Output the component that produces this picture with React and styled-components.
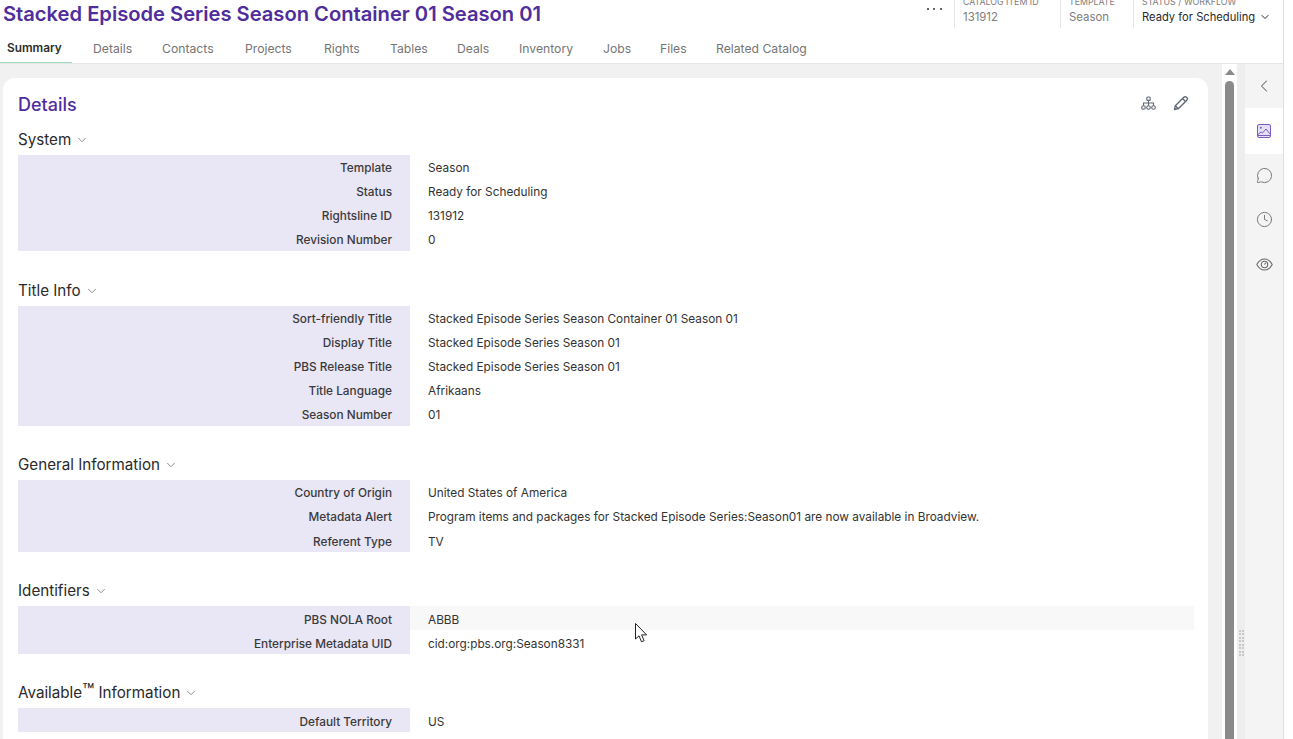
import React from 'react'
import styled, { createGlobalStyle } from 'styled-components'
import { ChevronDown, ChevronLeft, MessageCircle, Clock } from 'lucide-react'

const Global = createGlobalStyle`
  html, body { margin: 0; padding: 0; height: 100%; overflow: hidden; background: #fff; }
  body { font-family: Inter, "Noto Sans", sans-serif; color: #2b2b2b; }
`

const Page = styled.div`
  position: relative;
  width: 1284px;
  height: 739px;
  display: flex;
  flex-direction: column;
  border-right: 1px solid #dedede;
  box-sizing: border-box;
  overflow: hidden;
`

const Header = styled.header`
  flex: none;
  height: 64px;
  box-sizing: border-box;
  border-bottom: 1px solid #e6e6e6;
  background: #fff;
`

const TitleBar = styled.div`
  height: 28px;
  display: flex;
  justify-content: space-between;
  padding-left: 3px;
`

const Title = styled.h1`
  margin: 0;
  font-size: 20.15px;
  line-height: 28px;
  font-weight: 600;
  color: #4f2d9c;
  white-space: nowrap;
`

const Meta = styled.div`
  display: flex;
  align-items: flex-start;
  height: 28px;
`

const More = styled.div`
  width: 40px;
  height: 18px;
  display: flex;
  align-items: center;
  justify-content: center;
  gap: 4.5px;
  & > span { width: 2px; height: 2px; background: #333; border-radius: 50%; }
`

const MetaItem = styled.div`
  width: ${p => p.$width}px;
  height: 28px;
  box-sizing: border-box;
  border-left: 1px solid #e6e6e6;
  padding-left: 8px;
  overflow: hidden;
`

const MetaLabel = styled.div`
  font-size: 8.8px;
  line-height: 12px;
  margin-top: -4px;
  color: #7d7d7d;
  white-space: nowrap;
`

const MetaValue = styled.div`
  display: flex;
  align-items: center;
  gap: 4px;
  font-size: ${p => (p.$strong ? '11.2px' : '11.4px')};
  line-height: 16px;
  margin-top: 1px;
  color: ${p => (p.$strong ? '#2b2b2b' : '#7d7d7d')};
  white-space: nowrap;
`

const Tabs = styled.nav`
  height: 35px;
  display: flex;
  align-items: stretch;
`

const ActiveTab = styled.div`
  display: flex;
  align-items: center;
  box-sizing: border-box;
  width: 72px;
  margin-right: 21px;
  padding: 6px 0 0 7px;
  font-size: 11.8px;
  font-weight: 600;
  color: #2b2b2b;
  border-bottom: 1px solid #9ed8bd;
`

const Tab = styled.div`
  display: flex;
  align-items: center;
  width: ${p => p.$pitch}px;
  padding-top: 5px;
  font-size: 12.2px;
  color: #757575;
  white-space: nowrap;
`

const Body = styled.div`
  flex: 1;
  min-height: 0;
  display: flex;
  background: #f1f1f1;
`

const Content = styled.main`
  width: 1222px;
  flex: none;
  padding: 14px 14px 0 3px;
  box-sizing: border-box;
  overflow: hidden;
`

const Card = styled.section`
  background: #fff;
  border-radius: 12px 12px 0 0;
  padding: 15px 14px 0 15px;
  height: 700px;
  box-sizing: border-box;
`

const CardHead = styled.div`
  display: flex;
  justify-content: space-between;
  align-items: center;
  height: 24px;
  margin-bottom: 8px;
`

const CardTitle = styled.h2`
  margin: -1px 0 0;
  font-size: 18px;
  font-weight: 500;
  color: #4f2d9c;
`

const CardTools = styled.div`
  display: flex;
  align-items: center;
  gap: 17px;
  color: #5f6672;
  margin-right: 5px;
  margin-top: -4px;
`

const Group = styled.div`
  margin-bottom: ${p => p.$gap}px;
`

const GroupHead = styled.div`
  display: flex;
  align-items: center;
  gap: 4px;
  box-sizing: border-box;
  height: 30px;
  padding-bottom: 2px;
  font-size: 15.2px;
  font-weight: 400;
  color: #2b2b2b;
  white-space: pre;
  & > svg { margin-top: 2px; color: #666; }
`

const Trademark = styled.span`
  font-size: 1.3em;
  line-height: 0;
`

const Row = styled.div`
  display: grid;
  grid-template-columns: 392px 1fr;
  height: 24px;
  font-size: 11.8px;
  line-height: ${p => p.$lead}px;
  background: ${p => (p.$hover ? '#f8f8f8' : 'transparent')};
`

const Label = styled.div`
  background: #e9e6f6;
  height: 24px;
  text-align: right;
  padding-right: 18px;
  font-weight: 500;
  color: #3a3a3a;
`

const Value = styled.div`
  padding-left: 18px;
  height: 24px;
  color: #333;
`

const Track = styled.div`
  width: 15px;
  flex: none;
  background: #fff;
  display: flex;
  flex-direction: column;
  align-items: center;
`

const ArrowUp = styled.div`
  margin-top: 5px;
  width: 0;
  height: 0;
  border-left: 5px solid transparent;
  border-right: 5px solid transparent;
  border-bottom: 6px solid #8a8a8a;
`

const Thumb = styled.div`
  margin-top: 6px;
  width: 9px;
  flex: 1;
  background: #8a8a8a;
  border-radius: 5px 5px 0 0;
`

const Splitter = styled.div`
  width: 8px;
  flex: none;
  background: #eeeeee;
  display: flex;
  align-items: flex-end;
  justify-content: center;
  padding-bottom: 83px;
  box-sizing: border-box;
`

const Grip = styled.div`
  display: grid;
  grid-template-columns: 2px 2px;
  gap: 1.5px 1px;
  & > span { width: 2px; height: 2px; background: #c8c8c8; }
`

const Rail = styled.aside`
  width: 38px;
  flex: none;
  background: #f4f4f4;
  display: flex;
  flex-direction: column;
`

const RailItem = styled.div`
  height: ${p => p.$height}px;
  display: flex;
  align-items: center;
  justify-content: center;
  background: ${p => (p.$active ? '#fff' : 'transparent')};
  color: ${p => (p.$active ? '#7c5cc4' : '#6a6a6a')};
`

const Cursor = styled.svg`
  position: absolute;
  left: 635px;
  top: 623px;
`

const tabs = [['Details', 69], ['Contacts', 83], ['Projects', 79], ['Rights', 66], ['Tables', 67], ['Deals', 62], ['Inventory', 84], ['Jobs', 57], ['Files', 56], ['Related Catalog', 100]]

const groups = [
  { id: 'system', name: 'System', gap: 25, lead: 26, rows: [['Template', 'Season'], ['Status', 'Ready for Scheduling'], ['Rightsline ID', '131912'], ['Revision Number', '0']] },
  { id: 'title', name: 'Title Info', gap: 24, lead: 26, rows: [['Sort-friendly Title', 'Stacked Episode Series Season Container 01 Season 01'], ['Display Title', 'Stacked Episode Series Season 01'], ['PBS Release Title', 'Stacked Episode Series Season 01'], ['Title Language', 'Afrikaans'], ['Season Number', '01']] },
  { id: 'general', name: 'General Information', gap: 24, lead: 26, rows: [['Country of Origin', 'United States of America'], ['Metadata Alert', 'Program items and packages for Stacked Episode Series:Season01 are now available in Broadview.'], ['Referent Type', 'TV', 28]] },
  { id: 'ids', name: 'Identifiers', gap: 24, lead: 28, rows: [['PBS NOLA Root', 'ABBB'], ['Enterprise Metadata UID', 'cid:org:pbs.org:Season8331']] },
  { id: 'available', name: <span>Available<Trademark>™</Trademark> Information</span>, gap: 0, lead: 28, rows: [['Default Territory', 'US']] },
]

function HierarchyIcon() {
  return (
    <svg width="15" height="15" viewBox="0 0 15 15" fill="none" stroke="currentColor" strokeWidth="1.1">
      <rect x="5.800" y="1" width="3.400" height="3.400" rx="1" />
      <path d="M7.500 4.400v5M2.500 9.500V7h10v2.500" />
      <circle cx="2.500" cy="11.500" r="1.800" />
      <circle cx="7.500" cy="11.500" r="1.800" />
      <circle cx="12.500" cy="11.500" r="1.800" />
    </svg>
  )
}

function EditIcon() {
  return (
    <svg width="16" height="16" viewBox="0 0 16 16" fill="none" stroke="currentColor" strokeWidth="1.3" strokeLinejoin="round">
      <path d="M1.500 14.500l.8-3.800L10.800 2.200a1.900 1.900 0 0 1 2.700 0l.3.300a1.900 1.900 0 0 1 0 2.700L5.300 13.700z" />
      <path d="M9.500 3.500l3 3M2.300 10.700l3 3" />
    </svg>
  )
}

function PictureIcon() {
  return (
    <svg width="14" height="14" viewBox="0 0 14 14" fill="#e6e0f7" stroke="currentColor" strokeWidth="1">
      <rect x=".5" y=".5" width="13" height="13" rx="1.500" />
      <circle cx="3.800" cy="3.800" r="1" fill="currentColor" stroke="none" />
      <path d="M1 10.500l3-2.500 1.500 1L9 5l4 5" fill="none" />
      <path d="M1 11.500h12" fill="none" />
    </svg>
  )
}

function WatchIcon() {
  return (
    <svg width="17" height="13" viewBox="0 0 17 13" fill="none" stroke="currentColor" strokeWidth="1.100">
      <path d="M.8 6.500C2.800 2.800 5.400 1 8.500 1s5.700 1.800 7.700 5.500c-2 3.700-4.600 5.500-7.700 5.500S2.800 10.200.8 6.500z" />
      <circle cx="8.500" cy="6.500" r="3.200" />
      <path d="M8.500 6.500l1.300-1.600" />
    </svg>
  )
}

export default function App() {
  return (
    <>
      <Global />
      <Page>
        <Header>
          <TitleBar>
            <Title>Stacked Episode Series Season Container 01 Season 01</Title>
            <Meta>
              <More><span /><span /><span /></More>
              <MetaItem $width={106}>
                <MetaLabel>CATALOG ITEM ID</MetaLabel>
                <MetaValue>131912</MetaValue>
              </MetaItem>
              <MetaItem $width={73}>
                <MetaLabel>TEMPLATE</MetaLabel>
                <MetaValue>Season</MetaValue>
              </MetaItem>
              <MetaItem $width={150}>
                <MetaLabel>STATUS / WORKFLOW</MetaLabel>
                <MetaValue $strong>Ready for Scheduling <ChevronDown size={12} /></MetaValue>
              </MetaItem>
            </Meta>
          </TitleBar>
          <Tabs>
            <ActiveTab>Summary</ActiveTab>
            {tabs.map(([t, pitch]) => <Tab key={t} $pitch={pitch}>{t}</Tab>)}
          </Tabs>
        </Header>
        <Body>
          <Content>
            <Card>
              <CardHead>
                <CardTitle>Details</CardTitle>
                <CardTools>
                  <HierarchyIcon />
                  <EditIcon />
                </CardTools>
              </CardHead>
              {groups.map(g => (
                <Group key={g.id} $gap={g.gap}>
                  <GroupHead>
                    {g.name}<ChevronDown size={14} strokeWidth={1.25} />
                  </GroupHead>
                  {g.rows.map(([l, v, lead]) => (
                    <Row key={l} $lead={lead || g.lead} $hover={l === 'PBS NOLA Root'}>
                      <Label>{l}</Label>
                      <Value>{v}</Value>
                    </Row>
                  ))}
                </Group>
              ))}
            </Card>
          </Content>
          <Track>
            <ArrowUp />
            <Thumb />
          </Track>
          <Splitter>
            <Grip>{Array.from({ length: 16 }).map((_, i) => <span key={i} />)}</Grip>
          </Splitter>
          <Rail>
            <RailItem $height={44}><ChevronLeft size={20} strokeWidth={1.25} /></RailItem>
            <RailItem $active $height={46}><PictureIcon /></RailItem>
            <RailItem $height={42}><MessageCircle size={17} strokeWidth={1.25} /></RailItem>
            <RailItem $height={47}><Clock size={17} strokeWidth={1.25} /></RailItem>
            <RailItem $height={43}><WatchIcon /></RailItem>
          </Rail>
        </Body>
        <Cursor width="13" height="21" viewBox="0 0 13 21">
          <path d="M.5.5v15.500l3.500-3.200 2.500 6 2.600-1.100-2.500-5.800h5z" fill="#fff" stroke="#222" strokeWidth="1" />
        </Cursor>
      </Page>
    </>
  )
}
